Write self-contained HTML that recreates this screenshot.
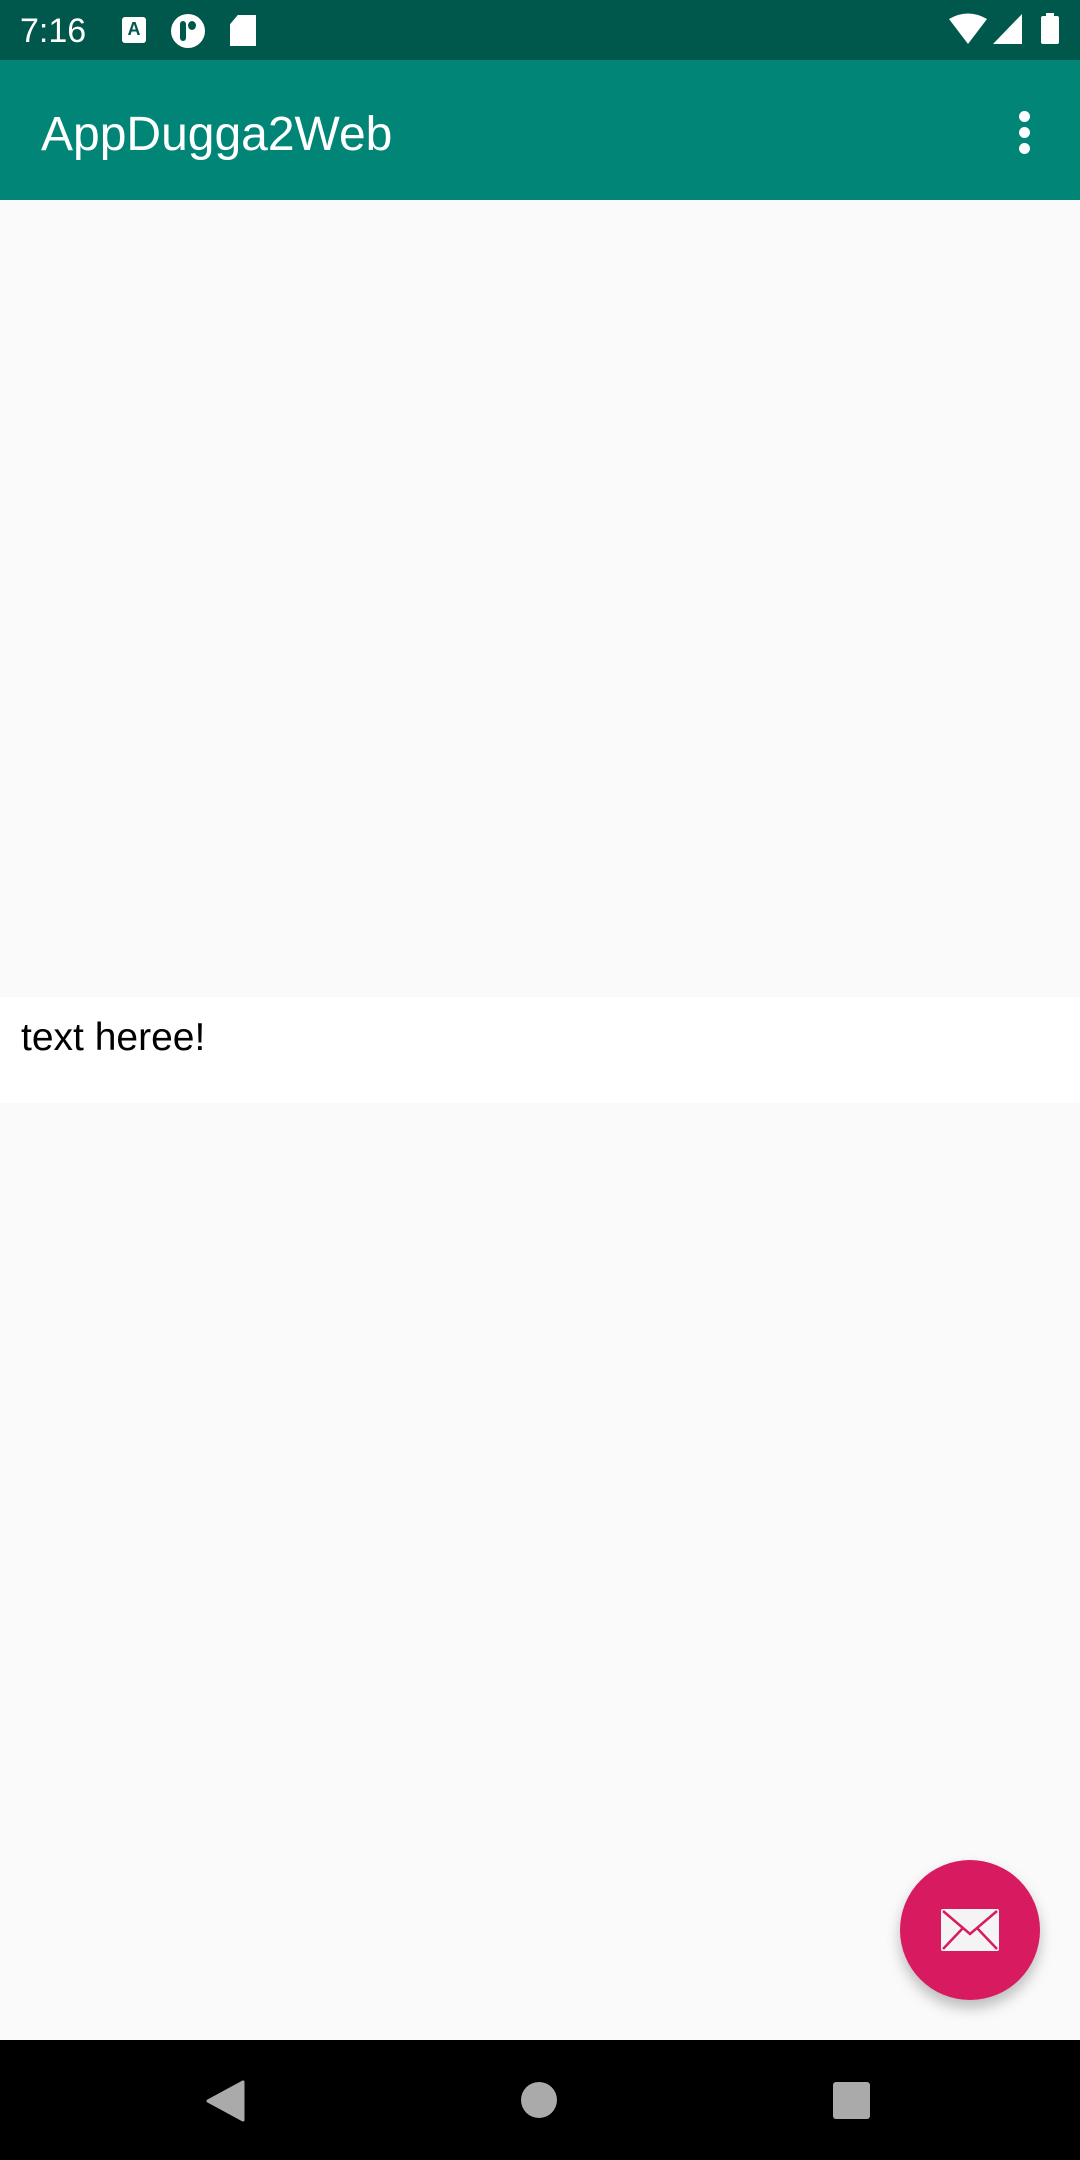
<!DOCTYPE html>
<html><head><style>
body{margin:0;width:1080px;height:2160px;background:#fafafa;position:relative;overflow:hidden;font-family:"Liberation Sans",sans-serif}
.sb{position:absolute;left:0;top:0;width:1080px;height:60px;background:#00574b;color:#fff}
.tb{position:absolute;left:0;top:60px;width:1080px;height:140px;background:#008577}
.strip{position:absolute;left:0;top:997px;width:1080px;height:106px;background:#fff}
.nav{position:absolute;left:0;top:2040px;width:1080px;height:120px;background:#000}
.fab{position:absolute;left:900px;top:1860px;width:140px;height:140px;border-radius:50%;background:#d81b60;box-shadow:0 8px 14px rgba(0,0,0,.25)}
</style></head><body>
<div class="sb">
<div style="position:absolute;left:20px;top:12px;font-size:34px">7:16</div>
<div style="position:absolute;left:122px;top:17px;width:24px;height:26px;background:#fff;border-radius:3px;color:#00574b;font-size:18px;font-weight:bold;text-align:center;line-height:24px">A</div>
<div style="position:absolute;left:171px;top:14px;width:34px;height:34px;border-radius:50%;background:#fff"><div style="position:absolute;left:9px;top:7px;width:6px;height:20px;background:#00574b;border-radius:3px"></div><div style="position:absolute;left:17px;top:7px;width:8px;height:9px;background:#00574b;border-radius:50%"></div></div>
<div style="position:absolute;left:230px;top:15px;width:26px;height:31px;background:#fff;clip-path:polygon(30% 0,100% 0,100% 100%,0 100%,0 30%)"></div>
<svg style="position:absolute;left:945px;top:12px" width="120" height="36"><path d="M4 7 Q23 -4 42 7 L23 32Z" fill="#fff"/><path d="M77 2 V32 H48Z" fill="#fff"/><rect x="96" y="4" width="18" height="28" rx="2" fill="#fff"/><rect x="101" y="1" width="8" height="4" fill="#fff"/></svg>
</div>
<div class="tb">
<div style="position:absolute;left:41px;top:45px;font-size:48px;color:#fff;line-height:60px">AppDugga2Web</div>
<div style="position:absolute;left:1019px;top:51px;width:12px">
<div style="width:11px;height:11px;border-radius:50%;background:#fff;margin-bottom:5px"></div>
<div style="width:11px;height:11px;border-radius:50%;background:#fff;margin-bottom:5px"></div>
<div style="width:11px;height:11px;border-radius:50%;background:#fff"></div></div>
</div>
<div class="strip"><div style="position:absolute;left:21px;top:18px;font-size:39px;color:#000;line-height:45px">text heree!</div></div>
<div class="fab"><svg style="position:absolute;left:41px;top:49px" width="58" height="42"><rect x="0" y="0" width="58" height="42" rx="2" fill="#f4f4f4"/><path d="M2 2 L29 25 L56 2 M2 40 L22 19 M56 40 L36 19" stroke="#d81b60" stroke-width="2.5" fill="none"/></svg></div>
<div class="nav">
<svg style="position:absolute;left:205px;top:40px" width="40" height="42"><path d="M38 2 V40 L3 21Z" fill="#aaa" stroke="#aaa" stroke-linejoin="round" stroke-width="3"/></svg>
<div style="position:absolute;left:521px;top:42px;width:36px;height:36px;border-radius:50%;background:#aaa"></div>
<div style="position:absolute;left:833px;top:42px;width:37px;height:37px;border-radius:3px;background:#aaa"></div>
</div>
</body></html>
